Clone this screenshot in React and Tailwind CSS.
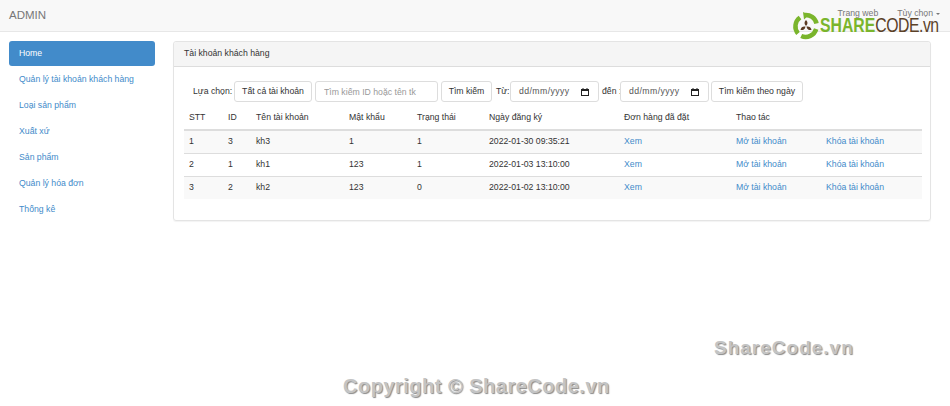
import React from 'react';

const menu = ['Quản lý tài khoản khách hàng', 'Loại sản phẩm', 'Xuất xứ', 'Sản phẩm', 'Quản lý hóa đơn', 'Thống kê'];

const rows = [
  ['1', '3', 'kh3', '1', '1', '2022-01-30 09:35:21'],
  ['2', '1', 'kh1', '123', '1', '2022-01-03 13:10:00'],
  ['3', '2', 'kh2', '123', '0', '2022-01-02 13:10:00'],
];

const headers = [
  ['STT', 'w-[39px]'],
  ['ID', 'w-[28px]'],
  ['Tên tài khoản', 'w-[93px]'],
  ['Mật khẩu', 'w-[68px]'],
  ['Trạng thái', 'w-[72px]'],
  ['Ngày đăng ký', 'w-[135px]'],
  ['Đơn hàng đã đặt', 'w-[112px]'],
  ['Thao tác', 'w-[90px]'],
  ['', 'w-[101px]'],
];

const Btn = ({ children, className = '' }) => (
  <button type="button" className={`h-[21px] shrink-0 rounded-[3px] border border-[#dddddd] bg-white text-center text-[#333333] ${className}`}>
    {children}
  </button>
);

// Date field with the dd/mm/yyyy mask and a solid calendar glyph
const DateBox = ({ className = '' }) => (
  <div className={`flex h-[21px] shrink-0 items-center justify-between rounded-[3px] border border-[#dddddd] bg-white pl-[8px] pr-[9px] ${className}`}>
    <span className="tracking-[0.42px] text-[#555555]">dd/mm/yyyy</span>
    <svg width="8" height="8" viewBox="0 0 8 8" className="shrink-0">
      <path d="M0 1h8v7H0z" fill="#222222" />
      <path d="M1 3h6v4H1z" fill="#ffffff" />
      <path d="M1.5 0h1v1h-1zM5.5 0h1v1h-1z" fill="#222222" />
    </svg>
  </div>
);

// Recycle mark + wordmark sitting over the navbar's right corner
const Logo = () => (
  <div className="absolute left-[792px] top-[12px] flex items-center">
    <svg width="28" height="28" viewBox="0 0 28 28" className="shrink-0">
      <g fill="none" stroke="#7ab52c" strokeWidth="4.5">
        <path d="M12.500 3a11 11 0 0 1 12 8.500" />
        <path d="M24.200 17a11 11 0 0 1-15 7" />
        <path d="M6 21.500a11 11 0 0 1 2-16" />
      </g>
      <path d="M11 0l6 3-5 4.500z" fill="#7ab52c" />
      <path d="M14 8c2 2 2 4 0 6-2-2-2-4 0-6z" fill="#5a3a22" />
      <path d="M8.500 18c.5-3 2.500-4 5-3.500-.5 3-2.500 4-5 3.500z" fill="#5a3a22" />
      <path d="M19.500 18c-.5-3-2.500-4-5-3.500.5 3 2.500 4 5 3.500z" fill="#5a3a22" />
    </svg>
    <div className="mt-[-1px] w-[118px] origin-left scale-x-[0.81] whitespace-nowrap text-[19.5px] leading-none text-[#5b4128]">
      <span className="font-bold text-[#7ab52c]">SHARE</span>
      <span className="tracking-[-0.6px]">CODE.vn</span>
    </div>
  </div>
);

export default function App() {
  return (
    <div className="relative h-[406px] w-[950px] overflow-hidden bg-white font-['Liberation_Sans',sans-serif] text-[8.7px] text-[#333333]">
      {/* navbar */}
      <nav className="flex h-[32px] items-center justify-between border-b border-[#e7e7e7] bg-[#f8f8f8] pl-[9px] pr-[10px]">
        <span className="text-[11.5px] text-[#777777]">ADMIN</span>
        <div className="mb-[3px] flex items-center text-[#777777]">
          <span>Trang web</span>
          <span className="ml-[19px]">Tùy chọn</span>
          <span className="ml-[3px] mt-[1px] h-0 w-0 border-x-[2.5px] border-t-[2.5px] border-x-transparent border-t-[#777777]" />
        </div>
      </nav>

      <div className="flex pl-[9px] pt-[9px]">
        {/* side menu */}
        <aside className="w-[146px] shrink-0">
          <div className="flex h-[25px] items-center rounded-[3px] bg-[#428bca] pl-[10px] text-white">Home</div>
          {menu.map((label) => (
            <div key={label} className="mt-[1px] flex h-[25px] items-center pl-[10px] text-[#428bca]">
              {label}
            </div>
          ))}
        </aside>

        {/* accounts panel */}
        <section className="ml-[18px] h-[180px] w-[758px] shrink-0 rounded-[3px] border border-[#e4e4e4] shadow-[0_1px_1px_rgba(0,0,0,0.05)]">
          <div className="flex h-[25px] items-center rounded-t-[3px] border-b border-[#dddddd] bg-[#f5f5f5] pl-[10px]">
            Tài khoản khách hàng
          </div>

          <div className="mt-[14px] flex h-[21px] items-center whitespace-nowrap pl-[19px]">
            <span className="w-[41px] shrink-0">Lựa chọn:</span>
            <Btn className="w-[78px]">Tất cả tài khoản</Btn>
            <input
              type="text"
              placeholder="Tìm kiếm ID hoặc tên tk"
              className="ml-[3px] h-[21px] w-[123px] shrink-0 rounded-[3px] border border-[#dddddd] bg-white pl-[8px] placeholder:text-[#999999]"
            />
            <Btn className="ml-[3px] w-[51px]">Tìm kiếm</Btn>
            <span className="ml-[4px] w-[14px] shrink-0">Từ:</span>
            <DateBox className="w-[89px]" />
            <span className="ml-[3px] w-[18px] shrink-0">đến :</span>
            <DateBox className="w-[89px]" />
            <Btn className="ml-[2px] w-[92px]">Tìm kiếm theo ngày</Btn>
          </div>

          <table className="ml-[10px] mt-[5px] w-[738px] table-fixed border-collapse">
            <thead>
              <tr className="h-[23px] border-b-2 border-[#dddddd]">
                {headers.map(([label, width], i) => (
                  <th key={i} className={`${width} px-[5px] text-left font-normal`}>{label}</th>
                ))}
              </tr>
            </thead>
            <tbody>
              {rows.map((row, i) => (
                <tr key={row[0]} className={`h-[23px] ${i > 0 ? 'border-t border-[#dddddd]' : ''} ${i % 2 === 0 ? 'bg-[#f9f9f9]' : ''}`}>
                  {row.map((cell, j) => (
                    <td key={j} className="px-[5px]">{cell}</td>
                  ))}
                  <td className="px-[5px] text-[#428bca]">Xem</td>
                  <td className="px-[5px] text-[#428bca]">Mở tài khoản</td>
                  <td className="px-[5px] text-[#428bca]">Khóa tài khoản</td>
                </tr>
              ))}
            </tbody>
          </table>
        </section>
      </div>

      <Logo />

      {/* site watermarks */}
      <div className="absolute left-[714px] top-[334px] text-[19px] font-bold tracking-[1px] text-[#c4c4c4] [text-shadow:1px_1px_1px_#8a8a8a]">
        ShareCode.vn
      </div>
      <div className="absolute left-[343px] top-[371px] text-[20px] font-bold tracking-[0.5px] text-[#c4c4c4] [text-shadow:1px_1px_1px_#8a8a8a]">
        Copyright © ShareCode.vn
      </div>
    </div>
  );
}
